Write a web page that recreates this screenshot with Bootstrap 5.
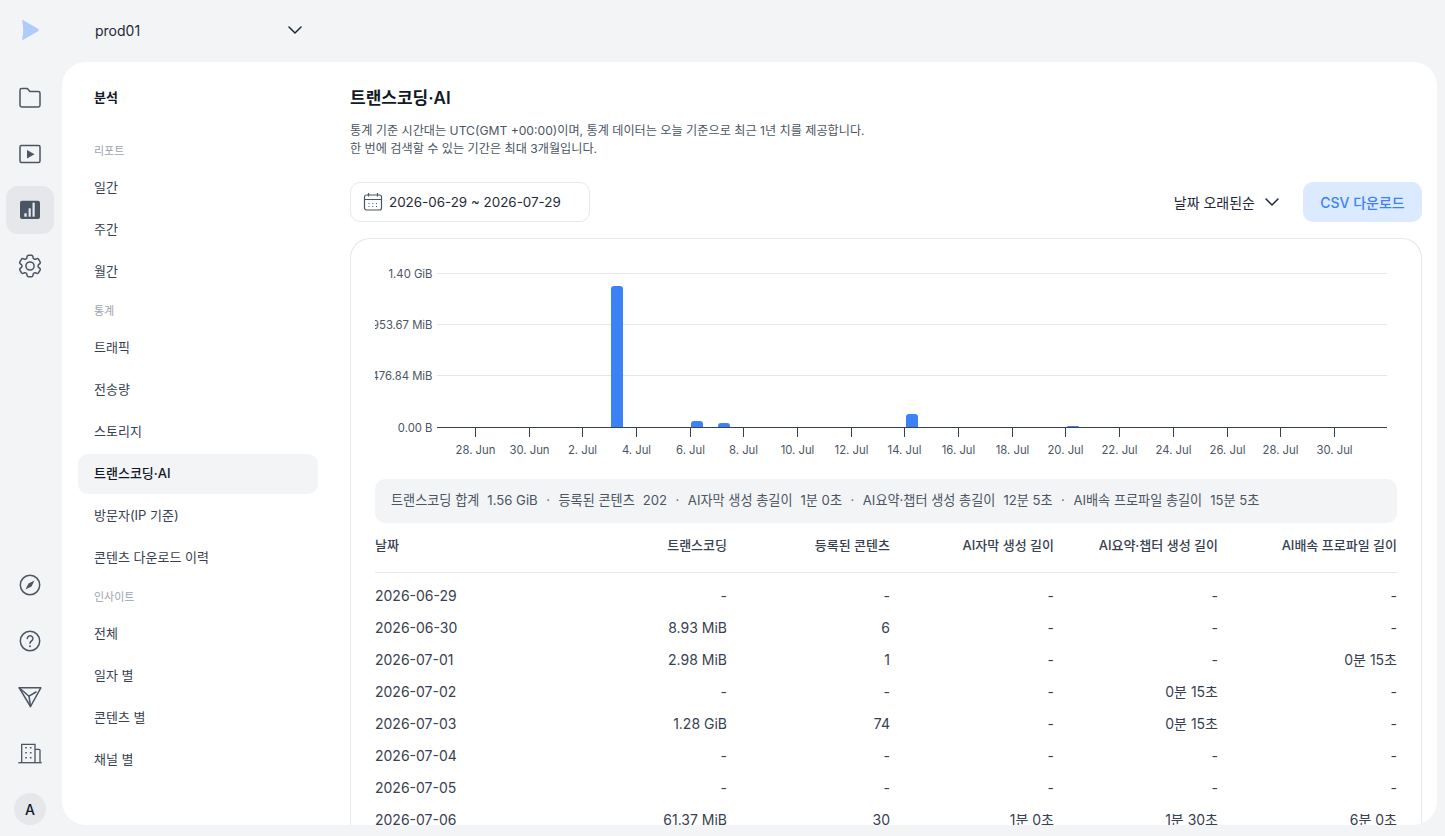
<!DOCTYPE html>
<html lang="ko">
  <head>
    <meta charset="UTF-8" />
    <meta name="viewport" content="width=device-width, initial-scale=1.0" />
    <title>트랜스코딩·AI</title>
    <link href="https://cdn.jsdelivr.net/npm/bootstrap@5.3.0/dist/css/bootstrap.min.css" rel="stylesheet" />
    <style>
      html, body { height: 100%; overflow: hidden; }
      body {
        background: #f3f4f6;
        color: #1f2937;
        font-family: Inter, "Noto Sans CJK KR", sans-serif;
        font-size: 14px;
      }
      .app-shell { height: 836px; }
      .rail { width: 62px; flex: none; padding: 0 2px 11px 0; }
      .rail-logo { height: 60px; margin-bottom: 2px; }
      .rail-btn {
        width: 48px; height: 48px; border-radius: 12px; color: #4b5563;
      }
      .rail-btn.is-on { background: #e5e7eb; }
      .rail-gap-top { gap: 8px; padding-top: 12px; }
      .rail-gap-bottom { gap: 8px; }
      .avatar-dot {
        width: 32px; height: 32px; border-radius: 50%; background: #e5e7eb;
        font-size: 14px; font-weight: 500; color: #111827;
      }
      .main-col { min-width: 0; padding-right: 8px; padding-bottom: 11px; }
      .top-strip { height: 62px; flex: none; padding: 0 0 2px 33px; }
      .project-pick { width: 208px; font-size: 14px; color: #1f2937; }
      .panel { background: #fff; border-radius: 24px; min-height: 0; overflow: hidden; }
      .side-menu { width: 288px; flex: none; padding: 15px 32px 0 16px; }
      .side-title { height: 42px; padding: 0 0 0 16px; font-weight: 700; font-size: 13px; color: #111827; margin-bottom: 14px; }
      .side-head { padding: 2px 0 0 16px; font-size: 11px; color: #9ca3af; height: 34px; }
      .side-link {
        height: 40px; margin: 1px 0; padding-left: 16px; border-radius: 10px; font-size: 13px; color: #374151;
        text-decoration: none;
      }
      .side-link.is-on { background: #f3f4f6; color: #111827; font-weight: 500; }
      .body-pane { min-width: 0; padding: 0 15px 0 0; }
      .page-title { font-size: 17px; font-weight: 600; color: #111827; margin: 0; line-height: 28px; padding-top: 22px; }
      .page-note { font-size: 12.15px; line-height: 18px; color: #4b5563; margin: 10px 0 0; }
      .tool-row { margin-top: 24px; height: 40px; }
      .date-pick {
        width: 240px; height: 40px; border: 1px solid #e5e7eb; border-radius: 10px; padding-left: 12px;
        gap: 6px; font-size: 13.4px; color: #1f2937;
      }
      .sort-pick { font-size: 14px; color: #1f2937; gap: 9px; margin-right: 23px; }
      .csv-btn {
        width: 119px; height: 40px; background: #dbeafe; color: #3b82f6; border: 0; border-radius: 10px;
        font-size: 14px; font-weight: 500; padding: 0;
      }
      .chart-box {
        margin-top: 16px; border: 1px solid #e5e7eb; border-bottom: 0; border-radius: 20px 20px 0 0;
        padding: 24px 24px 0;
      }
      .chart-svg { display: block; width: 1022px; height: 200px; }
      .chart-svg text { font-family: Inter, sans-serif; font-size: 11.3px; fill: #4b5563; }
      .sum-bar {
        margin-top: 16px; height: 44px; background: #f3f4f6; border-radius: 10px; padding-left: 16px;
        font-size: 13.15px; color: #4b5563; white-space: nowrap;
      }
      .sum-bar b { font-weight: 400; margin-left: 8px; }
      .sum-bar i { font-style: normal; margin: 0 8.5px; color: #6b7280; }
      .stat-table { table-layout: fixed; width: 1022px; margin: 0; font-size: 14px; }
      .stat-table th, .stat-table td {
        padding: 0; text-align: right; color: #374151; background: transparent; white-space: nowrap; vertical-align: middle;
      }
      .stat-table th { height: 49px; padding-bottom: 3px; font-size: 13px; font-weight: 500; color: #374151; border-bottom: 1px solid #e5e7eb; }
      .stat-table td { height: 32px; border: 0; font-size: 14px; color: #374151; }
      .stat-table tbody tr:first-child td { height: 39px; padding-top: 7px; }
      .stat-table th:first-child, .stat-table td:first-child { text-align: left; }
    </style>
  </head>
  <body>
    <div class="app-shell d-flex">
      <aside class="rail d-flex flex-column align-items-center">
        <div class="rail-logo d-flex align-items-center justify-content-center">
          <svg width="18" height="22" viewBox="0 0 18 22"><path d="M2.200 1.200 17 9.800a1.400 1.400 0 0 1 0 2.400L2.200 20.800c-.7.400-1.300-.1-1.100-.9 1.500-5.500 1.500-12.300 0-17.800-.2-.8.4-1.300 1.100-.9Z" fill="#aecbfa"/></svg>
        </div>
        <div class="d-flex flex-column align-items-center rail-gap-top">
          <a class="rail-btn d-flex align-items-center justify-content-center"><svg width="24" height="24" viewBox="0 0 24 24" fill="none" stroke="currentColor" stroke-width="1.500" stroke-linejoin="round"><path d="M2 4.200A1.700 1.700 0 0 1 3.700 2.500h5.600l2.700 3h8.300A1.700 1.700 0 0 1 22 7.200v12.100a1.700 1.700 0 0 1-1.700 1.700H3.700A1.700 1.700 0 0 1 2 19.300Z"/></svg></a>
          <a class="rail-btn d-flex align-items-center justify-content-center"><svg width="24" height="24" viewBox="0 0 24 24" fill="none" stroke="currentColor" stroke-width="1.500"><rect x="2" y="3.500" width="20" height="17" rx="1.500"/><path d="M9 8v8.500l7.500-4.250Z" fill="currentColor" stroke="none"/></svg></a>
          <a class="rail-btn is-on d-flex align-items-center justify-content-center"><svg width="24" height="24" viewBox="0 0 24 24"><rect x="2" y="2.700" width="20" height="18.300" rx="2" fill="#4b5563"/><rect x="6.300" y="15.300" width="2.400" height="3.400" fill="#e5e7eb"/><rect x="10.600" y="10.300" width="2.200" height="8.400" fill="#e5e7eb"/><rect x="14.500" y="4.700" width="2.200" height="14" fill="#e5e7eb"/></svg></a>
          <a class="rail-btn d-flex align-items-center justify-content-center"><svg width="24" height="24" viewBox="2 2 20 20" fill="none" stroke="currentColor" stroke-width="1.250" stroke-linejoin="round"><path d="M9.594 3.940c.09-.542.56-.94 1.110-.94h2.593c.55 0 1.020.398 1.110.94l.213 1.281c.063.374.313.686.645.870.074.04.147.083.22.127.325.196.72.257 1.075.124l1.217-.456a1.125 1.125 0 0 1 1.370.49l1.296 2.247a1.125 1.125 0 0 1-.26 1.431l-1.003.827c-.293.241-.438.613-.43.992a7.723 7.723 0 0 1 0 .255c-.008.378.137.75.43.991l1.004.827c.424.35.534.955.26 1.430l-1.298 2.247a1.125 1.125 0 0 1-1.369.491l-1.217-.456c-.355-.133-.75-.072-1.076.124a6.470 6.470 0 0 1-.22.128c-.331.183-.581.495-.644.869l-.213 1.281c-.09.543-.56.94-1.110.94h-2.594c-.55 0-1.019-.398-1.110-.94l-.213-1.281c-.062-.374-.312-.686-.644-.87a6.520 6.520 0 0 1-.22-.127c-.325-.196-.72-.257-1.076-.124l-1.217.456a1.125 1.125 0 0 1-1.369-.49l-1.297-2.247a1.125 1.125 0 0 1 .26-1.431l1.004-.827c.292-.24.437-.613.43-.991a6.932 6.932 0 0 1 0-.255c.007-.38-.138-.751-.43-.992l-1.004-.827a1.125 1.125 0 0 1-.26-1.430l1.297-2.247a1.125 1.125 0 0 1 1.370-.491l1.216.456c.356.133.751.072 1.076-.124.072-.044.146-.086.22-.128.332-.183.582-.495.644-.869l.214-1.280Z"/><circle cx="12" cy="12" r="3.400"/></svg></a>
        </div>
        <div class="d-flex flex-column align-items-center rail-gap-bottom mt-auto">
          <a class="rail-btn d-flex align-items-center justify-content-center"><svg width="24" height="24" viewBox="0 0 24 24" fill="none" stroke="currentColor" stroke-width="1.500"><circle cx="12" cy="12" r="9.700"/><path d="M16.500 7.500l-3 6-6 3 3-6Z" fill="currentColor" stroke="none"/></svg></a>
          <a class="rail-btn d-flex align-items-center justify-content-center"><svg width="24" height="24" viewBox="0 0 24 24" fill="none" stroke="currentColor" stroke-width="1.500" stroke-linecap="round"><circle cx="12" cy="12" r="9.700"/><path d="M9.300 9.500A2.800 2.800 0 1 1 13.500 12c-1 .6-1.500 1.100-1.500 2.200"/><path d="M12 17.200v.1" stroke-width="2"/></svg></a>
          <a class="rail-btn d-flex align-items-center justify-content-center"><svg width="24" height="24" viewBox="0 0 24 24" fill="none" stroke="currentColor" stroke-width="1.500" stroke-linejoin="round" stroke-linecap="round"><path d="M1.200 2.800h21.600L12.500 21.500Z"/><path d="M1.200 2.800 11 11.200l1.500 10.300"/><path d="M11 11.200 18 7"/></svg></a>
          <a class="rail-btn d-flex align-items-center justify-content-center"><svg width="24" height="24" viewBox="0 0 24 24" fill="none" stroke="currentColor" stroke-width="1.300"><path d="M0.300 21.700h23.400"/><path d="M3.700 21.700V3.300H17v18.400"/><path d="M17 8.300h4a1 1 0 0 1 1 1v12.400"/><path d="M7.200 6.700h1.600M11.900 6.700h1.600M7.200 11.700h1.600M11.900 11.700h1.600M7.200 16.700h1.600M11.900 16.700h1.600" stroke-width="1.500"/></svg></a>
          <div class="avatar-dot d-flex align-items-center justify-content-center mt-2">A</div>
        </div>
      </aside>

      <div class="main-col flex-grow-1 d-flex flex-column">
        <div class="top-strip d-flex align-items-center">
          <div class="project-pick d-flex align-items-center justify-content-between">
            <span>prod01</span>
            <svg width="16" height="16" viewBox="0 0 16 16" fill="none" stroke="#1f2937" stroke-width="1.500" stroke-linecap="round" stroke-linejoin="round"><path d="M2 5l6 6 6-6"/></svg>
          </div>
        </div>
        <div class="panel flex-grow-1 d-flex">
          <nav class="side-menu d-flex flex-column">
            <div class="side-title d-flex align-items-center">분석</div>
            <div class="side-head d-flex align-items-center">리포트</div>
            <a class="side-link d-flex align-items-center">일간</a>
            <a class="side-link d-flex align-items-center">주간</a>
            <a class="side-link d-flex align-items-center">월간</a>
            <div class="side-head d-flex align-items-center">통계</div>
            <a class="side-link d-flex align-items-center">트래픽</a>
            <a class="side-link d-flex align-items-center">전송량</a>
            <a class="side-link d-flex align-items-center">스토리지</a>
            <a class="side-link is-on d-flex align-items-center">트랜스코딩·AI</a>
            <a class="side-link d-flex align-items-center">방문자(IP 기준)</a>
            <a class="side-link d-flex align-items-center">콘텐츠 다운로드 이력</a>
            <div class="side-head d-flex align-items-center">인사이트</div>
            <a class="side-link d-flex align-items-center">전체</a>
            <a class="side-link d-flex align-items-center">일자 별</a>
            <a class="side-link d-flex align-items-center">콘텐츠 별</a>
            <a class="side-link d-flex align-items-center">채널 별</a>
          </nav>
          <main class="body-pane flex-grow-1">
            <h1 class="page-title">트랜스코딩·AI</h1>
            <p class="page-note">통계 기준 시간대는 UTC(GMT +00:00)이며, 통계 데이터는 오늘 기준으로 최근 1년 치를 제공합니다.<br />한 번에 검색할 수 있는 기간은 최대 3개월입니다.</p>
            <div class="tool-row d-flex align-items-center">
              <div class="date-pick d-flex align-items-center">
                <svg width="20" height="20" viewBox="0 0 20 20" fill="none" stroke="#4b5563" stroke-width="1.200"><rect x="1.500" y="3" width="17" height="15" rx="2"/><path d="M1.500 7.500h17M5.500 1v3.500M14.500 1v3.500"/><path d="M5.500 11.500h1.500M9.300 11.500h1.500M13 11.500h1.500M5.500 14.500h1.500M9.300 14.500h1.500M13 14.500h1.500" stroke-dasharray="1 .8"/></svg>
                <span>2026-06-29 ~ 2026-07-29</span>
              </div>
              <div class="sort-pick d-flex align-items-center ms-auto">
                <span>날짜 오래된순</span>
                <svg width="16" height="16" viewBox="0 0 16 16" fill="none" stroke="#1f2937" stroke-width="1.500" stroke-linecap="round" stroke-linejoin="round"><path d="M2 5l6 6 6-6"/></svg>
              </div>
              <button class="btn csv-btn" type="button">CSV 다운로드</button>
            </div>
            <section class="chart-box">
              <svg class="chart-svg" id="chart" viewBox="375 263 1022 200"></svg>
              <div class="sum-bar d-flex align-items-center">
                <span>트랜스코딩 합계</span><b>1.56 GiB</b><i>·</i>
                <span>등록된 콘텐츠</span><b>202</b><i>·</i>
                <span>AI자막 생성 총길이</span><b>1분 0초</b><i>·</i>
                <span>AI요약·챕터 생성 총길이</span><b>12분 5초</b><i>·</i>
                <span>AI배속 프로파일 총길이</span><b>15분 5초</b>
              </div>
              <table class="table stat-table">
                <colgroup>
                  <col style="width: 188px" /><col style="width: 164px" /><col style="width: 163px" /><col style="width: 164px" /><col style="width: 164px" /><col style="width: 179px" />
                </colgroup>
                <thead>
                  <tr><th>날짜</th><th>트랜스코딩</th><th>등록된 콘텐츠</th><th>AI자막 생성 길이</th><th>AI요약·챕터 생성 길이</th><th>AI배속 프로파일 길이</th></tr>
                </thead>
                <tbody id="rows"></tbody>
              </table>
            </section>
          </main>
        </div>
      </div>
    </div>

    <script src="https://cdn.jsdelivr.net/npm/bootstrap@5.3.0/dist/js/bootstrap.bundle.min.js"></script>
    <script>
      const rows = [
        ["2026-06-29", "-", "-", "-", "-", "-"],
        ["2026-06-30", "8.93 MiB", "6", "-", "-", "-"],
        ["2026-07-01", "2.98 MiB", "1", "-", "-", "0분 15초"],
        ["2026-07-02", "-", "-", "-", "0분 15초", "-"],
        ["2026-07-03", "1.28 GiB", "74", "-", "0분 15초", "-"],
        ["2026-07-04", "-", "-", "-", "-", "-"],
        ["2026-07-05", "-", "-", "-", "-", "-"],
        ["2026-07-06", "61.37 MiB", "30", "1분 0초", "1분 30초", "6분 0초"],
      ];
      document.getElementById("rows").innerHTML = rows
        .map((r) => "<tr>" + r.map((c) => `<td>${c}</td>`).join("") + "</tr>")
        .join("");

      // chart is drawn in page coordinates through the viewBox
      const ticks = ["28. Jun","30. Jun","2. Jul","4. Jul","6. Jul","8. Jul","10. Jul","12. Jul","14. Jul","16. Jul","18. Jul","20. Jul","22. Jul","24. Jul","26. Jul","28. Jul","30. Jul"];
      const bars = [[611, 286], [691, 421], [718, 423], [906, 414], [1067, 426]];
      let svg = "";
      [[273.5, "1.40 GiB"], [324.5, "953.67 MiB"], [375.5, "476.84 MiB"]].forEach(([y, label]) => {
        svg += `<line x1="437" x2="1387" y1="${y}" y2="${y}" stroke="#e5e7eb"/>`;
        svg += `<text x="432.500" y="${y + 4}" text-anchor="end">${label}</text>`;
      });
      svg += `<text x="432.500" y="431.500" text-anchor="end">0.00 B</text>`;
      bars.forEach(([x, y]) => {
        const h = 427 - y;
        const r = Math.min(3, h);
        svg += `<path d="M${x} 427V${y + r}q0-${r} ${r}-${r}h${12 - 2 * r}q${r} 0 ${r} ${r}V427Z" fill="#3b82f6"/>`;
      });
      svg += `<line x1="437" x2="1387" y1="427.500" y2="427.500" stroke="#374151"/>`;
      ticks.forEach((t, i) => {
        const x = Math.round(475 + i * 53.68) + 0.5;
        svg += `<line x1="${x}" x2="${x}" y1="428" y2="437" stroke="#374151"/>`;
        svg += `<text x="${x}" y="454" text-anchor="middle">${t}</text>`;
      });
      document.getElementById("chart").innerHTML = svg;
    </script>
  </body>
</html>
